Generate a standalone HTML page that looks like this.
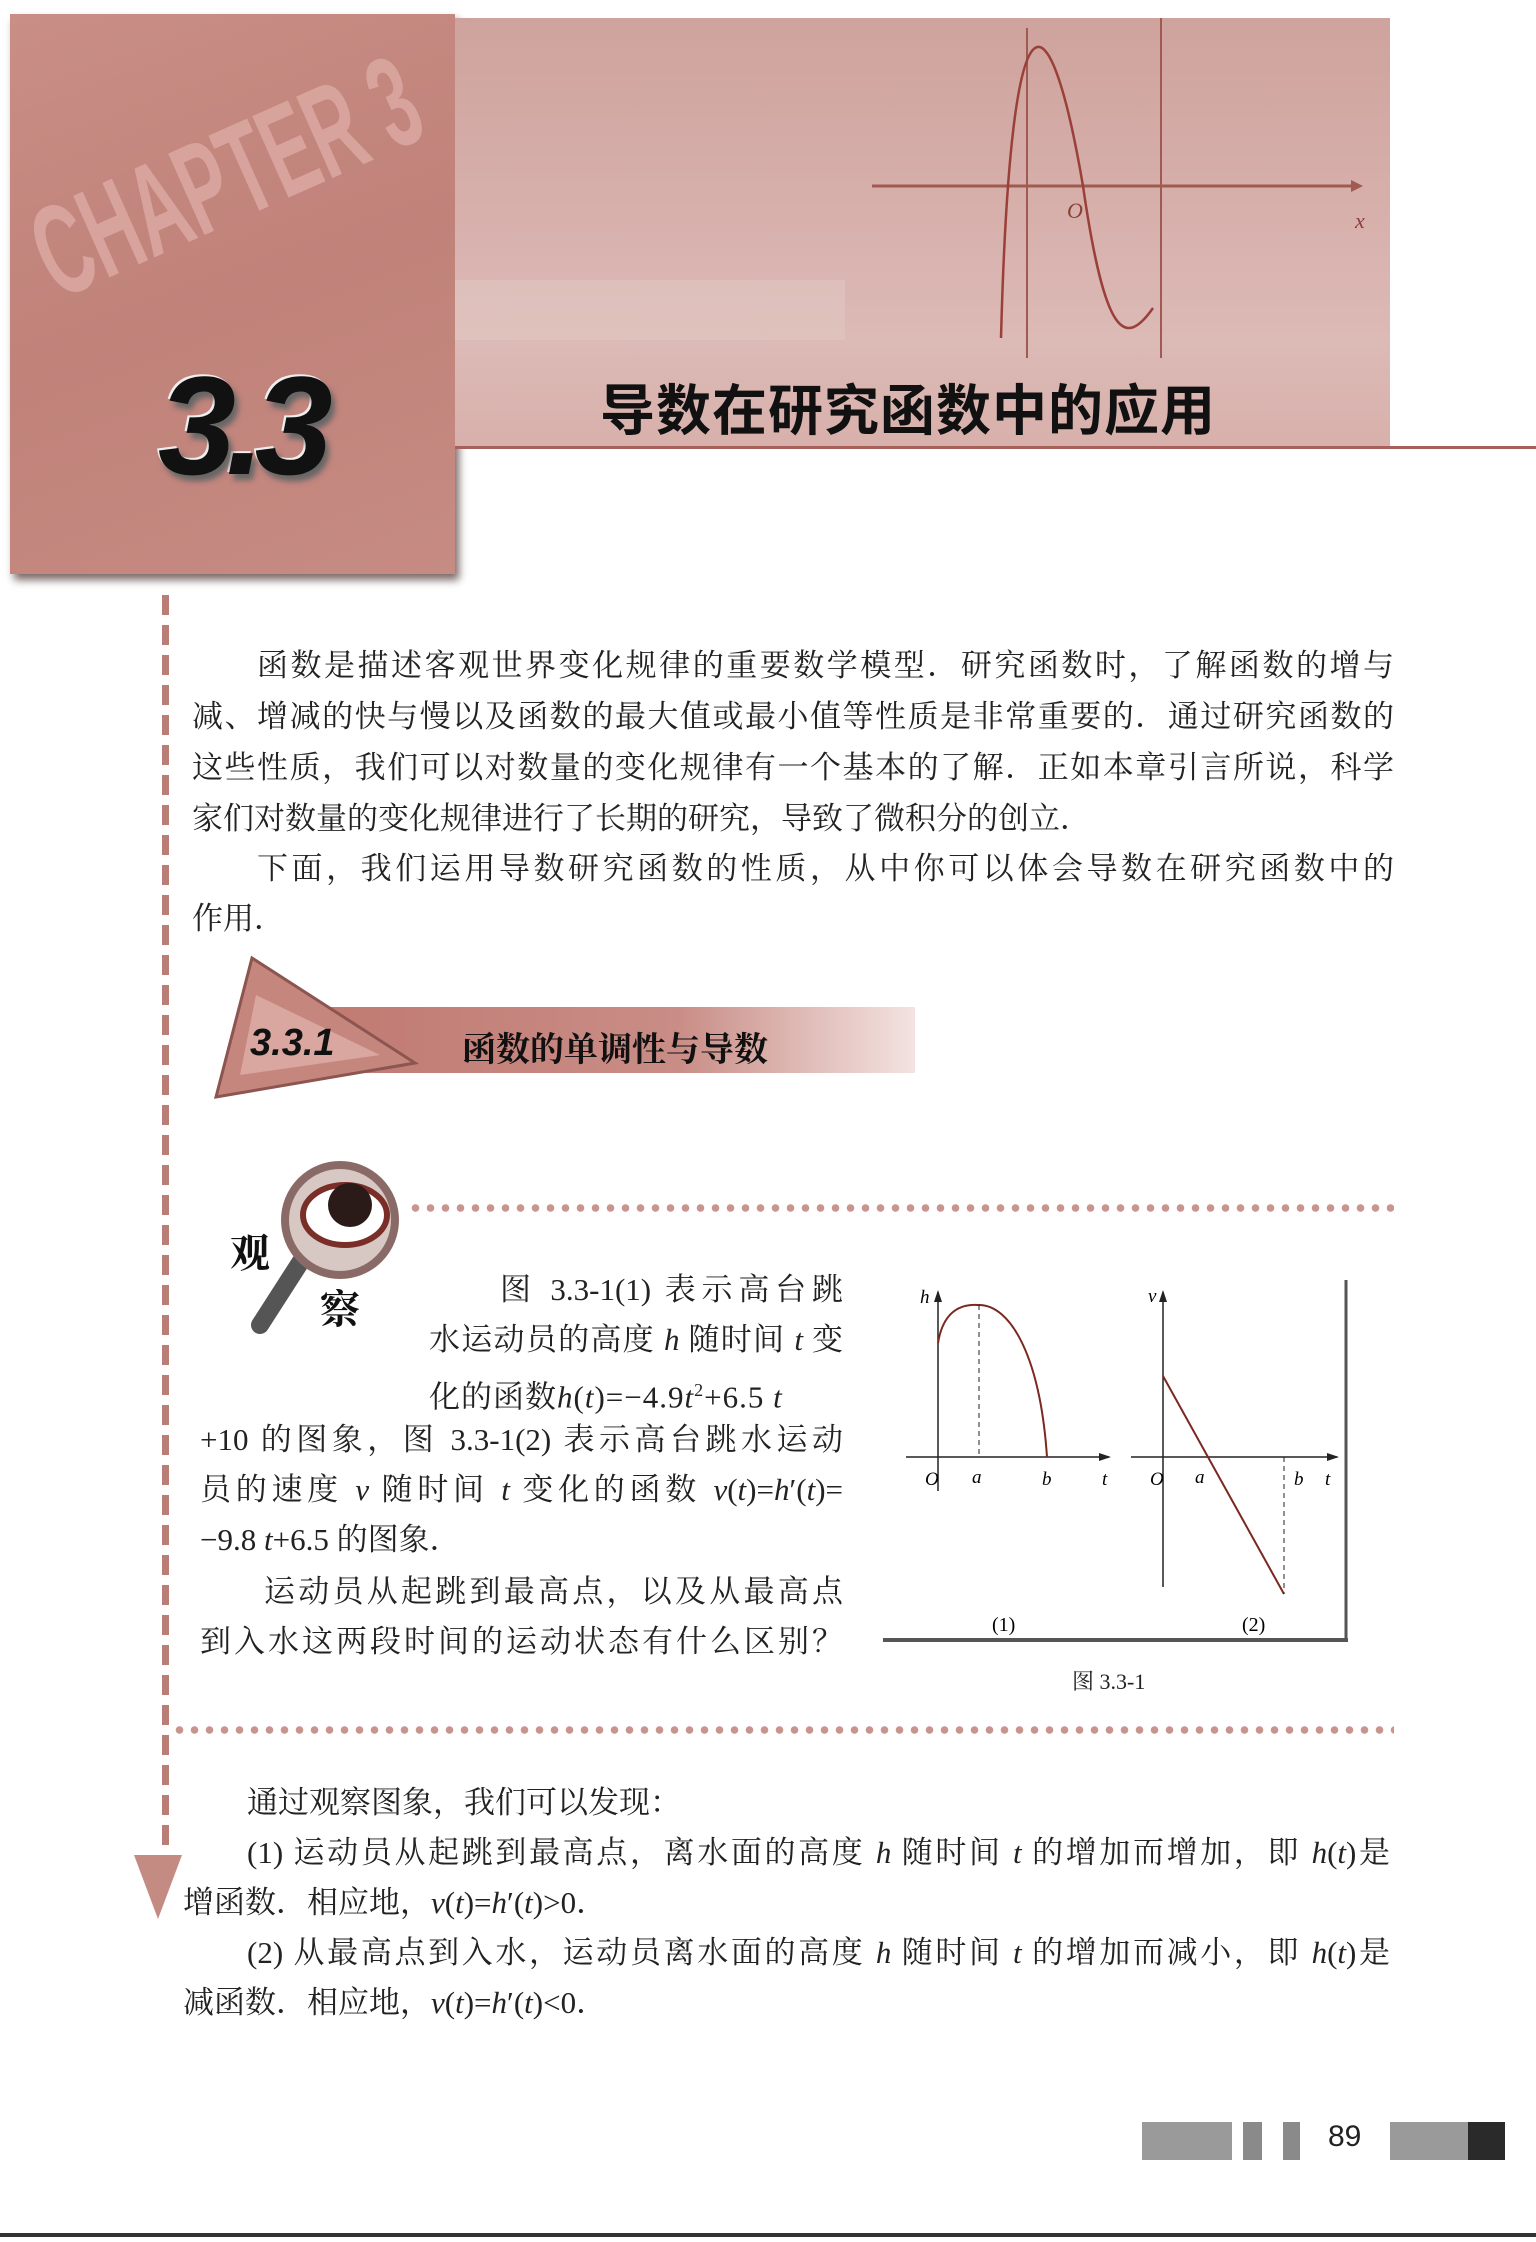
<!DOCTYPE html>
<html><head><meta charset="utf-8">
<style>
body{margin:0;width:1536px;height:2242px;background:#fff;position:relative;overflow:hidden;font-family:"Liberation Serif","Noto Serif CJK SC","Noto Sans CJK SC",serif;color:#222}
.a{position:absolute;white-space:nowrap}
.t{font-size:31px;line-height:50px;position:absolute;white-space:nowrap}
.j{text-align:justify;text-align-last:justify}
i{font-family:"Liberation Serif",serif}
</style></head><body>
<!-- header -->
<div class="a" style="left:10px;top:14px;width:445px;height:560px;background:linear-gradient(160deg,#c98e86,#c08279 50%,#c68b83);box-shadow:4px 6px 8px #7a6a66"></div>
<div class="a" style="left:455px;top:18px;width:935px;height:430px;background:linear-gradient(180deg,#cfa39d,#d6aeaa 40%,#dcbab6 75%,#d8b0ab)"></div>
<div class="a" style="left:455px;top:446px;width:1081px;height:3px;background:#a8615a"></div>
<div class="a" style="left:455px;top:280px;width:390px;height:60px;background:#e1c6c2;opacity:.6"></div>
<svg class="a" style="left:455px;top:18px" width="935" height="430">
<line x1="417" y1="168" x2="896" y2="168" stroke="#a05a52" stroke-width="3"/>
<polygon points="896,162 908,168 896,174" fill="#a05a52"/>
<line x1="572" y1="10" x2="572" y2="340" stroke="#a05a52" stroke-width="2"/>
<line x1="706" y1="0" x2="706" y2="340" stroke="#a05a52" stroke-width="2"/>
<path d="M546,320 C556,-60 596,-20 628,168 C650,320 670,330 698,290" fill="none" stroke="#9a4038" stroke-width="2.5"/>
<text x="612" y="200" font-size="22" fill="#8a4038" font-style="italic" font-family="Liberation Serif">O</text>
<text x="900" y="210" font-size="22" fill="#8a4038" font-style="italic" font-family="Liberation Serif">x</text>
</svg>
<div class="a" style="left:40px;top:220px;font:bold 72px 'Liberation Sans',sans-serif;color:#dba9a2;transform:rotate(-24deg) scaleY(1.8);transform-origin:0 50%;opacity:.85">CHAPTER 3</div>
<div class="a" style="left:158px;top:345px;font:bold italic 140px 'Liberation Sans',sans-serif;color:#111;letter-spacing:-10px;text-shadow:4px 6px 6px #666,-2px -2px 0 #eee">3.3</div>
<div class="a" style="left:600px;top:366px;font:bold 55px 'Noto Sans CJK SC',sans-serif;color:#111;letter-spacing:1px">导数在研究函数中的应用</div>
<!-- dashed left line -->
<div class="a" style="left:162px;top:595px;width:7px;height:1270px;background:repeating-linear-gradient(180deg,#b97f77 0 20px,transparent 20px 30px)"></div>
<svg class="a" style="left:134px;top:1855px" width="48" height="65"><polygon points="0,0 48,0 24,64" fill="#c48b83"/></svg>
<!-- intro paragraph -->
<div class="t j" style="left:257px;top:641px;width:1137px">函数是描述客观世界变化规律的重要数学模型．研究函数时，了解函数的增与</div>
<div class="t j" style="left:192px;top:692px;width:1202px">减、增减的快与慢以及函数的最大值或最小值等性质是非常重要的．通过研究函数的</div>
<div class="t j" style="left:192px;top:743px;width:1202px">这些性质，我们可以对数量的变化规律有一个基本的了解．正如本章引言所说，科学</div>
<div class="t" style="left:192px;top:794px">家们对数量的变化规律进行了长期的研究，导致了微积分的创立．</div>
<div class="t j" style="left:257px;top:844px;width:1137px">下面，我们运用导数研究函数的性质，从中你可以体会导数在研究函数中的</div>
<div class="t" style="left:192px;top:894px">作用．</div>
<!-- section banner -->
<div class="a" style="left:323px;top:1007px;width:592px;height:66px;background:linear-gradient(90deg,#c07a72,#c98d86 60%,#f3e3e1)"></div>
<svg class="a" style="left:210px;top:955px" width="215" height="150"><polygon points="42,3 6,142 205,108" fill="#c5867e" stroke="#8c5550" stroke-width="3"/><polygon points="46,40 30,120 170,100" fill="#d9a6a0"/></svg>
<div class="a" style="left:250px;top:1022px;font:bold italic 38px 'Liberation Sans',sans-serif;color:#111">3.3.1</div>
<div class="a" style="left:462px;top:1022px;font:bold 34px 'Noto Serif CJK SC',serif;color:#111">函数的单调性与导数</div>
<!-- observe box -->
<div class="a" style="left:408px;top:1203px;width:986px;height:10px;background:radial-gradient(circle,#c8948e 3.5px,transparent 4px) 0 0/15px 10px"></div>
<div class="a" style="left:172px;top:1725px;width:1222px;height:10px;background:radial-gradient(circle,#c8948e 3.5px,transparent 4px) 0 0/15px 10px"></div>
<svg class="a" style="left:225px;top:1155px" width="190" height="180">
<line x1="80" y1="100" x2="35" y2="170" stroke="#555" stroke-width="18" stroke-linecap="round"/>
<circle cx="115" cy="65" r="55" fill="#d8c8c4" stroke="#8a6a66" stroke-width="8"/>
<ellipse cx="120" cy="60" rx="42" ry="30" fill="#fff" stroke="#7a2e28" stroke-width="6"/>
<circle cx="125" cy="50" r="22" fill="#2a1a18"/>
</svg>
<div class="a" style="left:230px;top:1222px;font:bold 40px 'Noto Serif CJK SC',serif;color:#111">观</div>
<div class="a" style="left:320px;top:1278px;font:bold 40px 'Noto Serif CJK SC',serif;color:#111">察</div>
<div class="t j" style="left:500px;top:1265px;width:343px">图 3.3-1(1) 表示高台跳</div>
<div class="t j" style="left:429px;top:1315px;width:414px">水运动员的高度 <i>h</i> 随时间 <i>t</i> 变</div>
<div class="t" style="left:429px;top:1365px;letter-spacing:1px">化的函数<i>h</i>(<i>t</i>)=−4.9<i>t</i><sup style="font-size:18px">2</sup>+6.5 <i>t</i></div>
<div class="t j" style="left:200px;top:1415px;width:643px">+10 的图象，图 3.3-1(2) 表示高台跳水运动</div>
<div class="t j" style="left:200px;top:1465px;width:643px">员的速度 <i>v</i> 随时间 <i>t</i> 变化的函数 <i>v</i>(<i>t</i>)=<i>h</i>′(<i>t</i>)=</div>
<div class="t" style="left:200px;top:1515px">−9.8 <i>t</i>+6.5 的图象．</div>
<div class="t j" style="left:264px;top:1567px;width:579px">运动员从起跳到最高点，以及从最高点</div>
<div class="t" style="left:200px;top:1617px;letter-spacing:3px">到入水这两段时间的运动状态有什么区别？</div>
<!-- figure -->
<svg class="a" style="left:880px;top:1275px" width="475" height="375" font-family="Liberation Serif" font-style="italic" font-size="19">
<line x1="466" y1="5" x2="466" y2="365" stroke="#555" stroke-width="3"/>
<line x1="3" y1="365" x2="468" y2="365" stroke="#555" stroke-width="4"/>
<line x1="58" y1="216" x2="58" y2="17" stroke="#222" stroke-width="1.5"/>
<polygon points="54,27 58,15 62,27" fill="#222"/>
<line x1="26" y1="182" x2="229" y2="182" stroke="#222" stroke-width="1.5"/>
<polygon points="219,178 231,182 219,186" fill="#222"/>
<path d="M58,68 C65,25 95,30 99,30 C130,30 160,80 167,182" fill="none" stroke="#7a2820" stroke-width="2"/>
<line x1="99" y1="30" x2="99" y2="182" stroke="#222" stroke-dasharray="5,4"/>
<text x="40" y="28">h</text><text x="45" y="210">O</text><text x="92" y="208">a</text><text x="162" y="210">b</text><text x="222" y="210">t</text>
<line x1="283" y1="312" x2="283" y2="17" stroke="#222" stroke-width="1.5"/>
<polygon points="279,27 283,15 287,27" fill="#222"/>
<line x1="251" y1="182" x2="457" y2="182" stroke="#222" stroke-width="1.5"/>
<polygon points="447,178 459,182 447,186" fill="#222"/>
<line x1="283" y1="101" x2="404" y2="319" stroke="#7a2820" stroke-width="2"/>
<line x1="404" y1="182" x2="404" y2="319" stroke="#222" stroke-dasharray="5,4"/>
<text x="268" y="27">v</text><text x="270" y="210">O</text><text x="315" y="208">a</text><text x="414" y="210">b</text><text x="445" y="210">t</text>
<text x="112" y="356" font-style="normal" font-size="20">(1)</text>
<text x="362" y="356" font-style="normal" font-size="20">(2)</text>
</svg>
<div class="a" style="left:1072px;top:1665px;font-size:22px">图 3.3-1</div>
<!-- conclusions -->
<div class="t" style="left:247px;top:1778px">通过观察图象，我们可以发现：</div>
<div class="t j" style="left:247px;top:1828px;width:1143px">(1) 运动员从起跳到最高点，离水面的高度 <i>h</i> 随时间 <i>t</i> 的增加而增加，即 <i>h</i>(<i>t</i>)是</div>
<div class="t" style="left:183px;top:1878px">增函数．相应地，<i>v</i>(<i>t</i>)=<i>h</i>′(<i>t</i>)&gt;0．</div>
<div class="t j" style="left:247px;top:1928px;width:1143px">(2) 从最高点到入水，运动员离水面的高度 <i>h</i> 随时间 <i>t</i> 的增加而减小，即 <i>h</i>(<i>t</i>)是</div>
<div class="t" style="left:183px;top:1978px">减函数．相应地，<i>v</i>(<i>t</i>)=<i>h</i>′(<i>t</i>)&lt;0．</div>
<!-- page number -->
<div class="a" style="left:1142px;top:2122px;width:90px;height:38px;background:#9a9a9a"></div>
<div class="a" style="left:1243px;top:2122px;width:19px;height:38px;background:#8a8a8a"></div>
<div class="a" style="left:1283px;top:2122px;width:17px;height:38px;background:#8a8a8a"></div>
<div class="a" style="left:1328px;top:2120px;font:30px 'Liberation Sans',sans-serif;color:#222">89</div>
<div class="a" style="left:1390px;top:2122px;width:78px;height:38px;background:#9a9a9a"></div>
<div class="a" style="left:1468px;top:2122px;width:37px;height:38px;background:#2a2a2a"></div>
<div class="a" style="left:0;top:2233px;width:1536px;height:4px;background:#333"></div>
</body></html>
